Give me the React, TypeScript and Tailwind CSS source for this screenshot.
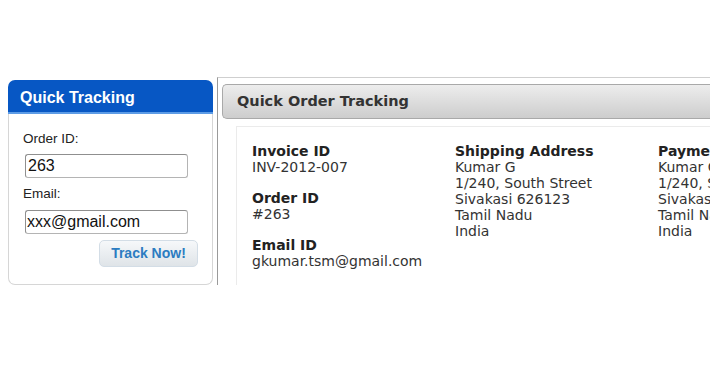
import React from 'react'

const verdana = { fontFamily: '"DejaVu Sans", Verdana, sans-serif' }

const TrackingSidebar = () => {
  return (
    <div className="mt-[3px] w-[205px] h-[205px] flex flex-col" style={{ fontFamily: '"Liberation Sans", Arial, sans-serif' }}>
      {/* 蓝色标题 */}
      <div className="h-[34px] shrink-0 rounded-t-[7px] bg-[#0757c4] border-b-2 border-[#5d9ce6] flex items-center pl-[12px] pt-[4px]">
        <span className="text-white font-bold text-[16px]">Quick Tracking</span>
      </div>
      <div className="flex-1 border border-t-0 border-[#d6d6d6] rounded-b-[7px] px-[14px] pt-[17px] flex flex-col">
        <label className="text-[13.5px] text-[#222] leading-[16px]">Order ID:</label>
        <div className="mt-[7px] ml-[2px] w-[163px] h-[24px] border border-[#b4b4b4] border-t-[#8f8f8f] border-l-[#8f8f8f] rounded-[3px] flex items-center pl-[2px] text-[16px] text-[#111]">
          263
        </div>
        <label className="mt-[8px] text-[13.5px] text-[#222] leading-[16px]">Email:</label>
        <div className="mt-[8px] ml-[2px] w-[163px] h-[24px] border border-[#b4b4b4] border-t-[#8f8f8f] border-l-[#8f8f8f] rounded-[3px] flex items-center pl-[1px] text-[16px] text-[#111]">
          xxx@gmail.com
        </div>
        <div className="mt-[6px] flex justify-end">
          <button className="w-[99px] h-[27px] rounded-[5px] border border-[#d3dde6] bg-gradient-to-b from-[#f6f8fa] to-[#dfe4e8] text-[#2c7cc1] font-bold text-[14px] flex items-center justify-center">
            Track Now!
          </button>
        </div>
      </div>
    </div>
  )
}

const InfoBlock = ({ title, lines }: { title: string; lines: string[] }) => (
  <div className="mb-[15px]">
    <div className="font-bold text-[#222]">{title}</div>
    {lines.map((l) => (
      <div key={l} className="text-[#333]">{l}</div>
    ))}
  </div>
)

const addressLines = ['Kumar G', '1/240, South Street', 'Sivakasi 626123', 'Tamil Nadu', 'India']

const OrderPanel = () => {
  return (
    <div className="flex-1 h-[208px] border-l border-t border-l-[#9a9a9a] border-t-[#cfcfcf] pl-[4px] pt-[6px] flex flex-col overflow-hidden" style={verdana}>
      {/* 灰色标题栏 */}
      <div className="h-[35px] shrink-0 rounded-l-[5px] border border-r-0 border-[#a9a9a9] bg-gradient-to-b from-[#ededed] to-[#cdcdcd] flex items-center pl-[14px]">
        <span className="font-bold text-[14.5px] text-[#333]">Quick Order Tracking</span>
      </div>
      {/* 内容区域 */}
      <div className="flex-1 ml-[14px] mt-[7px] border-l border-t border-[#ebebeb] pl-[15px] pt-[16px] flex text-[14px] leading-[16px] whitespace-nowrap">
        <div className="w-[203px] shrink-0">
          <InfoBlock title="Invoice ID" lines={['INV-2012-007']} />
          <InfoBlock title="Order ID" lines={['#263']} />
          <InfoBlock title="Email ID" lines={['gkumar.tsm@gmail.com']} />
        </div>
        <div className="w-[203px] shrink-0">
          <InfoBlock title="Shipping Address" lines={addressLines} />
        </div>
        <div className="w-[203px] shrink-0">
          <InfoBlock title="Payment Address" lines={addressLines} />
        </div>
      </div>
    </div>
  )
}

export default function App() {
  return (
    <div className="w-[710px] h-[380px] bg-white overflow-hidden flex items-start pt-[77px] pl-[8px]">
      <TrackingSidebar />
      <div className="w-[4px]" />
      <OrderPanel />
    </div>
  )
}
